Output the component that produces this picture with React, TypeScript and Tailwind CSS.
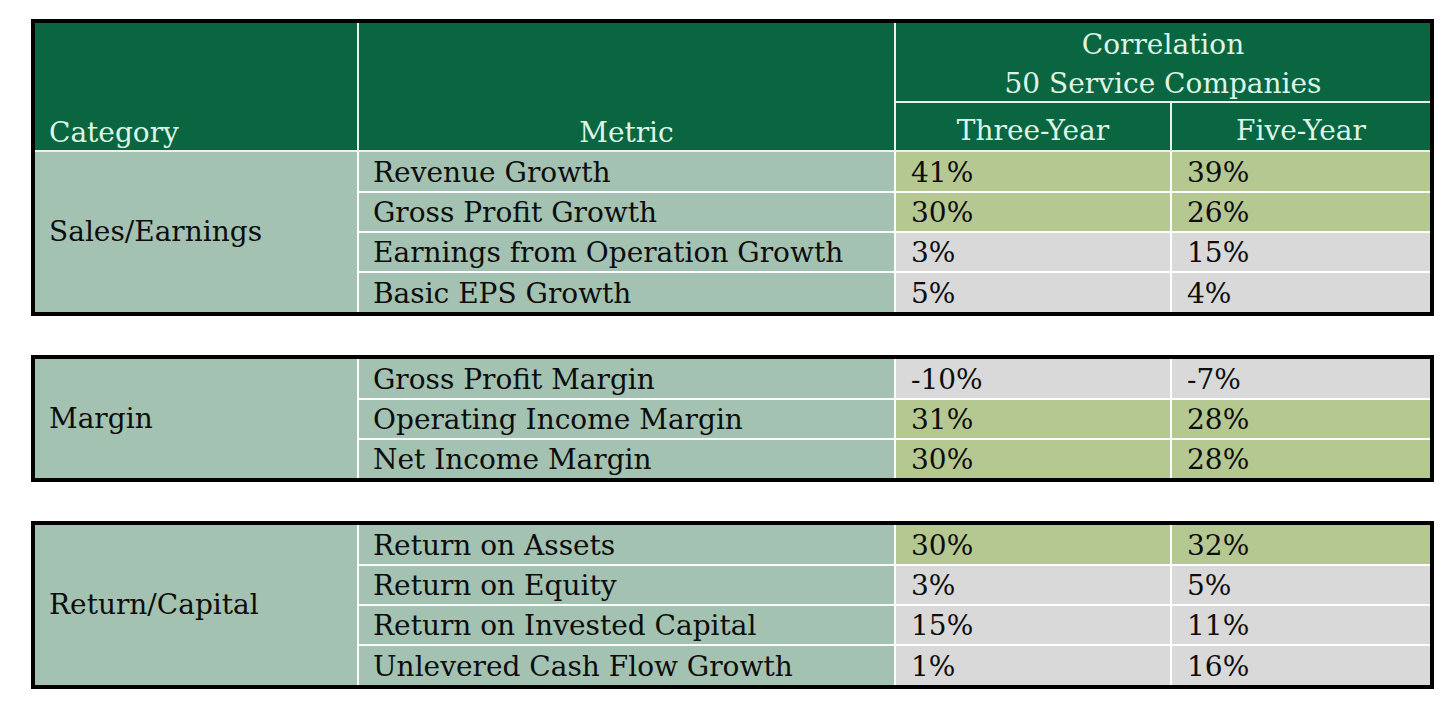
import React from 'react';

type Row = { metric: string; three: string; five: string; hi: boolean };

const groups: { category: string; rows: Row[]; heights: string }[] = [
  {
    category: 'Sales/Earnings',
    heights: 'grid-rows-[39px_38px_38px_39px]',
    rows: [
      { metric: 'Revenue Growth', three: '41%', five: '39%', hi: true },
      { metric: 'Gross Profit Growth', three: '30%', five: '26%', hi: true },
      { metric: 'Earnings from Operation Growth', three: '3%', five: '15%', hi: false },
      { metric: 'Basic EPS Growth', three: '5%', five: '4%', hi: false },
    ],
  },
  {
    category: 'Margin',
    heights: 'grid-rows-[39px_38px_38px]',
    rows: [
      { metric: 'Gross Profit Margin', three: '-10%', five: '-7%', hi: false },
      { metric: 'Operating Income Margin', three: '31%', five: '28%', hi: true },
      { metric: 'Net Income Margin', three: '30%', five: '28%', hi: true },
    ],
  },
  {
    category: 'Return/Capital',
    heights: 'grid-rows-[39px_38px_38px_39px]',
    rows: [
      { metric: 'Return on Assets', three: '30%', five: '32%', hi: true },
      { metric: 'Return on Equity', three: '3%', five: '5%', hi: false },
      { metric: 'Return on Invested Capital', three: '15%', five: '11%', hi: false },
      { metric: 'Unlevered Cash Flow Growth', three: '1%', five: '16%', hi: false },
    ],
  },
];

const cols = 'grid-cols-[322px_535px_274px_258px]';
const cell = 'flex items-end pl-[14px] pb-[4px] leading-none text-[#0d0d0d]';

function Body({ category, rows }: { category: string; rows: Row[] }) {
  return (
    <>
      <div
        className="flex items-center pl-[14px] leading-none bg-[#a3c2b2] text-[#0d0d0d]"
        style={{ gridRow: `span ${rows.length} / span ${rows.length}` }}
      >
        {category}
      </div>
      {rows.map((r) => (
        <React.Fragment key={r.metric}>
          <div className={`${cell} bg-[#a3c2b2]`}>{r.metric}</div>
          <div className={`${cell} pl-[15px] ${r.hi ? 'bg-[#b6c892]' : 'bg-[#d9d9d9]'}`}>{r.three}</div>
          <div className={`${cell} pl-[15px] ${r.hi ? 'bg-[#b6c892]' : 'bg-[#d9d9d9]'}`}>{r.five}</div>
        </React.Fragment>
      ))}
    </>
  );
}

export default function App() {
  return (
    <div
      className="min-h-screen w-full bg-white pt-[19px] pl-[31px] text-[28px]"
      style={{ fontFamily: '"DejaVu Serif", "Liberation Serif", serif' }}
    >
      <div className="flex w-[1403px] flex-col gap-[39px]">
        {/* Sales / Earnings with the header */}
        <div className="border-4 border-black">
          <div className={`grid ${cols} grid-rows-[78px_47px] gap-[2px] bg-[#e6f4ea] text-[#def4e6]`}>
            <div className="row-span-2 flex items-end pl-[14px] pb-[3px] leading-none bg-[#0a6640]">Category</div>
            <div className="row-span-2 flex items-end justify-center pb-[3px] leading-none bg-[#0a6640]">Metric</div>
            <div className="col-span-2 flex flex-col items-center justify-end bg-[#0a6640]">
              <div className="-mb-[2px] text-center leading-[39px]">
                Correlation
                <br />
                50 Service Companies
              </div>
            </div>
            <div className="flex items-end justify-center pb-[5px] leading-none bg-[#0a6640]">Three-Year</div>
            <div className="flex items-end justify-center pb-[5px] leading-none bg-[#0a6640]">Five-Year</div>
          </div>
          <div className={`grid ${cols} ${groups[0].heights} gap-[2px] border-t-2 border-[#e6f4ea] bg-white`}>
            <Body category={groups[0].category} rows={groups[0].rows} />
          </div>
        </div>

        {groups.slice(1).map((g) => (
          <div key={g.category} className="border-4 border-black">
            <div className={`grid ${cols} ${g.heights} gap-[2px] bg-white`}>
              <Body category={g.category} rows={g.rows} />
            </div>
          </div>
        ))}
      </div>
    </div>
  );
}
